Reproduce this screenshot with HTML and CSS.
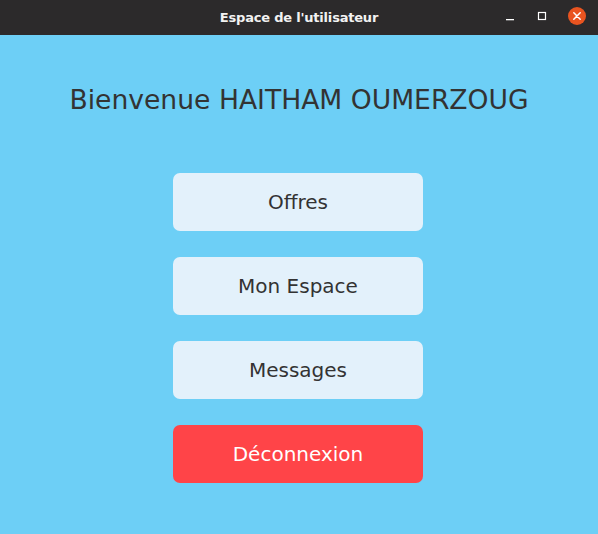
FILE: index.html
```html
<!DOCTYPE html>
<html>
<head>
<meta charset="utf-8">
<link rel="stylesheet" href="styles.css">
</head>
<body>
<div class="window">
  <header class="titlebar">
    <div class="title">Espace de l'utilisateur</div>
    <div class="controls">
      <svg class="ctl" width="12" height="12" viewBox="0 0 12 12"><rect x="2" y="9" width="8" height="1.3" fill="#fff"/></svg>
      <svg class="ctl" width="12" height="12" viewBox="0 0 12 12"><rect x="2.5" y="2.5" width="7" height="7" fill="none" stroke="#fff" stroke-width="1.2"/></svg>
      <svg class="ctl close" width="18" height="18" viewBox="0 0 18 18"><circle cx="9" cy="9" r="9" fill="#e95420"/><path d="M5.8 5.8 L12.2 12.2 M12.2 5.8 L5.8 12.2" stroke="#fff" stroke-width="1.5" stroke-linecap="round"/></svg>
    </div>
  </header>
  <main class="content">
    <h1 class="welcome">Bienvenue HAITHAM OUMERZOUG</h1>
    <nav class="menu">
      <button class="btn">Offres</button>
      <button class="btn">Mon Espace</button>
      <button class="btn">Messages</button>
      <button class="btn danger">Déconnexion</button>
    </nav>
  </main>
</div>
</body>
</html>
```
FILE: styles.css
```css
html, body { margin: 0; padding: 0; }
body { width: 598px; height: 534px; overflow: hidden; font-family: "DejaVu Sans", sans-serif; }
.window { display: flex; flex-direction: column; height: 534px; }
.titlebar {
  height: 35px; background: #2c2a2b; position: relative;
  display: flex; align-items: center; justify-content: center;
}
.title { color: #f2f2f2; font-family: "DejaVu Sans", sans-serif; font-weight: bold; font-size: 13px; letter-spacing: -0.2px; }
.controls { position: absolute; right: 12px; top: 7px; display: flex; align-items: center; gap: 20px; }
.ctl { display: block; }
.content { flex: 1; background: #6dcff6; display: flex; flex-direction: column; align-items: center; }
.welcome { margin: 49px 0 0; font-weight: normal; font-size: 26.6px; color: #333333; line-height: 32px; }
.menu { margin: 57px 0 0 -2px; display: flex; flex-direction: column; gap: 26px; }
.btn {
  width: 250px; height: 58px; border: none; border-radius: 7px; background: #e3f1fb;
  font-family: "DejaVu Sans", sans-serif; font-size: 20px; color: #333333; padding: 0;
}
.btn.danger { background: #ff4448; color: #ffffff; }
```
